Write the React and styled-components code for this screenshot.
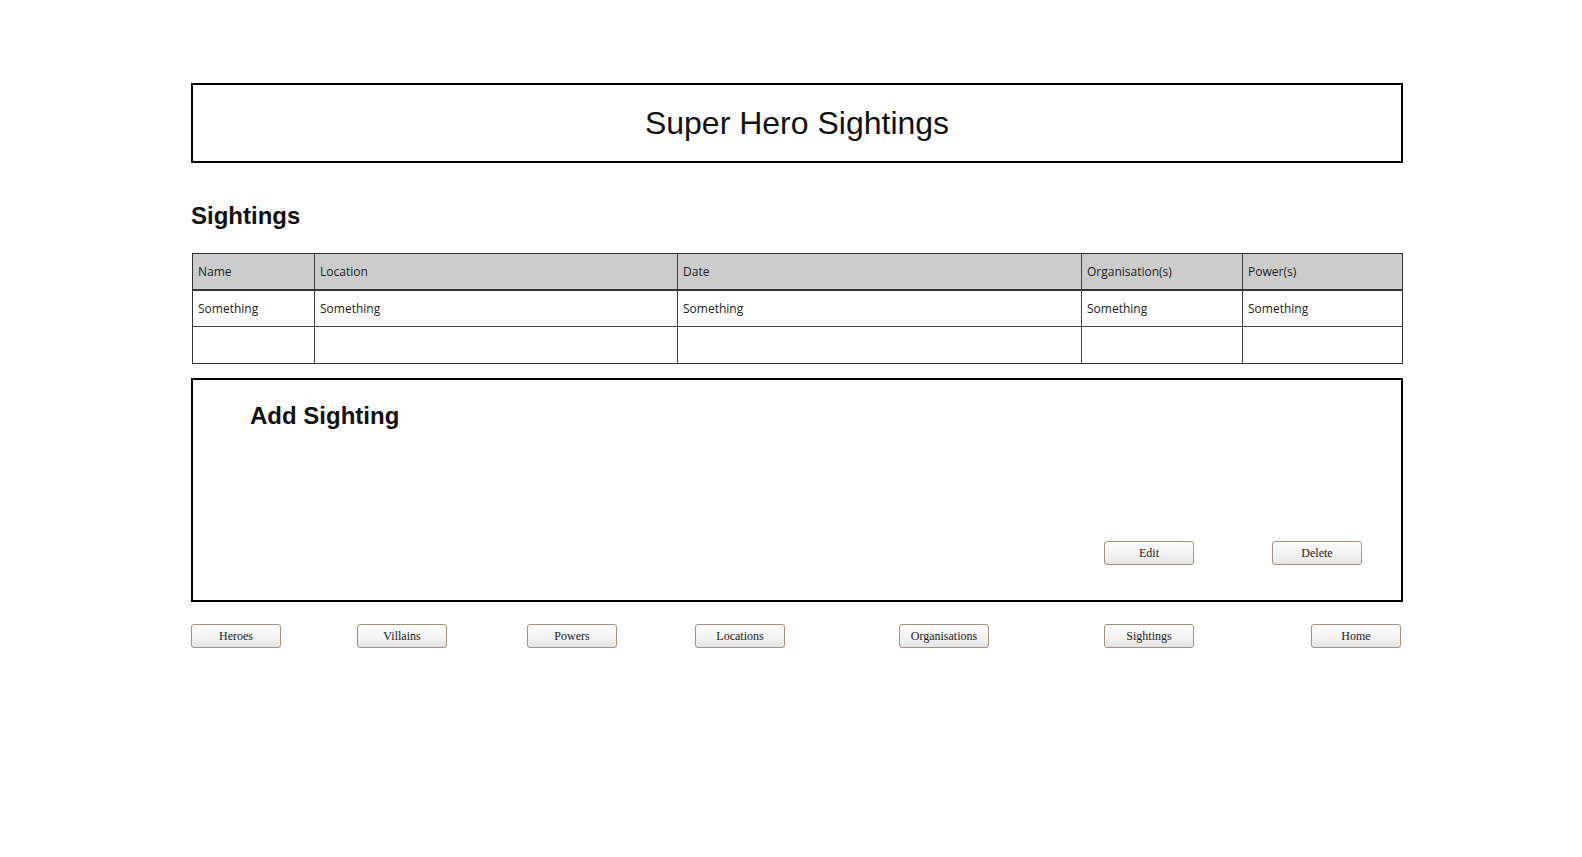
import React from "react";
import styled, { createGlobalStyle } from "styled-components";

const Global = createGlobalStyle`
  html, body { margin: 0; padding: 0; background: #ffffff; }
  body { font-family: "Liberation Sans", Arial, sans-serif; color: #000; }
`;

const Page = styled.div`
  width: 1212px;
  margin-left: 191px;
  padding-top: 83px;
  display: flex;
  flex-direction: column;
`;

const TitleBox = styled.header`
  height: 80px;
  box-sizing: border-box;
  border: 2px solid #000;
  display: flex;
  align-items: center;
  justify-content: center;
`;

const Title = styled.h1`
  margin: 0;
  font-family: "Liberation Sans", Arial, sans-serif;
  font-weight: normal;
  font-size: 32px;
  line-height: 36px;
  color: #111;
`;

const SectionHeading = styled.h2`
  margin: 39px 0 23px 0;
  font-family: "Liberation Sans", Arial, sans-serif;
  font-weight: bold;
  font-size: 24px;
  line-height: 28px;
  color: #111;
`;

const Table = styled.div`
  display: grid;
  grid-template-columns: 122px 363px 404px 161px 1fr;
  border: 1px solid #333;
  margin-left: 1px;
`;

const Cell = styled.div`
  box-sizing: border-box;
  height: ${(p) => (p.$head ? 37 : 36)}px;
  padding: 0 5px;
  display: flex;
  align-items: center;
  font-family: "Open Sans", "DejaVu Sans", sans-serif;
  font-size: 12px;
  color: #222;
  background: ${(p) => (p.$head ? "#cccccc" : "#ffffff")};
  border-right: ${(p) => (p.$last ? "none" : "1px solid #444")};
  border-bottom: ${(p) =>
    p.$head ? "2px solid #333" : p.$lastRow ? "none" : "1px solid #444"};
`;

const Panel = styled.section`
  margin-top: 14px;
  height: 224px;
  box-sizing: border-box;
  border: 2px solid #000;
  display: flex;
  flex-direction: column;
  padding: 22px 39px 35px 57px;
`;

const PanelHeading = styled.h2`
  margin: 0;
  font-family: "Liberation Sans", Arial, sans-serif;
  font-weight: bold;
  font-size: 24px;
  line-height: 28px;
  color: #111;
`;

const ActionRow = styled.div`
  margin-top: auto;
  display: flex;
  justify-content: flex-end;
  gap: 78px;
`;

const Button = styled.button`
  width: 90px;
  height: 24px;
  box-sizing: border-box;
  margin: 0 0 0 ${(p) => p.$ml || 0}px;
  padding: 0;
  border: 1px solid #a2927e;
  border-radius: 3px;
  background: linear-gradient(#ffffff 0%, #f4f4f4 50%, #e4e4e4 100%);
  font-family: "Liberation Serif", "Times New Roman", serif;
  font-size: 12px;
  color: #222;
  cursor: pointer;
`;

const NavRow = styled.nav`
  margin-top: 22px;
  display: flex;
`;

const headers = ["Name", "Location", "Date", "Organisation(s)", "Power(s)"];
const rows = [
  ["Something", "Something", "Something", "Something", "Something"],
  ["", "", "", "", ""],
];

const nav = [
  ["Heroes", 0],
  ["Villains", 76],
  ["Powers", 80],
  ["Locations", 78],
  ["Organisations", 114],
  ["Sightings", 115],
  ["Home", 117],
];

export default function App() {
  return (
    <>
      <Global />
      <Page>
        <TitleBox>
          <Title>Super Hero Sightings</Title>
        </TitleBox>
        <SectionHeading>Sightings</SectionHeading>
        <Table>
          {headers.map((h, i) => (
            <Cell key={h} $head $last={i === headers.length - 1}>
              {h}
            </Cell>
          ))}
          {rows.map((r, ri) =>
            r.map((c, ci) => (
              <Cell
                key={`${ri}-${ci}`}
                $last={ci === r.length - 1}
                $lastRow={ri === rows.length - 1}
              >
                {c}
              </Cell>
            ))
          )}
        </Table>
        <Panel>
          <PanelHeading>Add Sighting</PanelHeading>
          <ActionRow>
            <Button>Edit</Button>
            <Button>Delete</Button>
          </ActionRow>
        </Panel>
        <NavRow>
          {nav.map(([label, ml]) => (
            <Button key={label} $ml={ml}>
              {label}
            </Button>
          ))}
        </NavRow>
      </Page>
    </>
  );
}
